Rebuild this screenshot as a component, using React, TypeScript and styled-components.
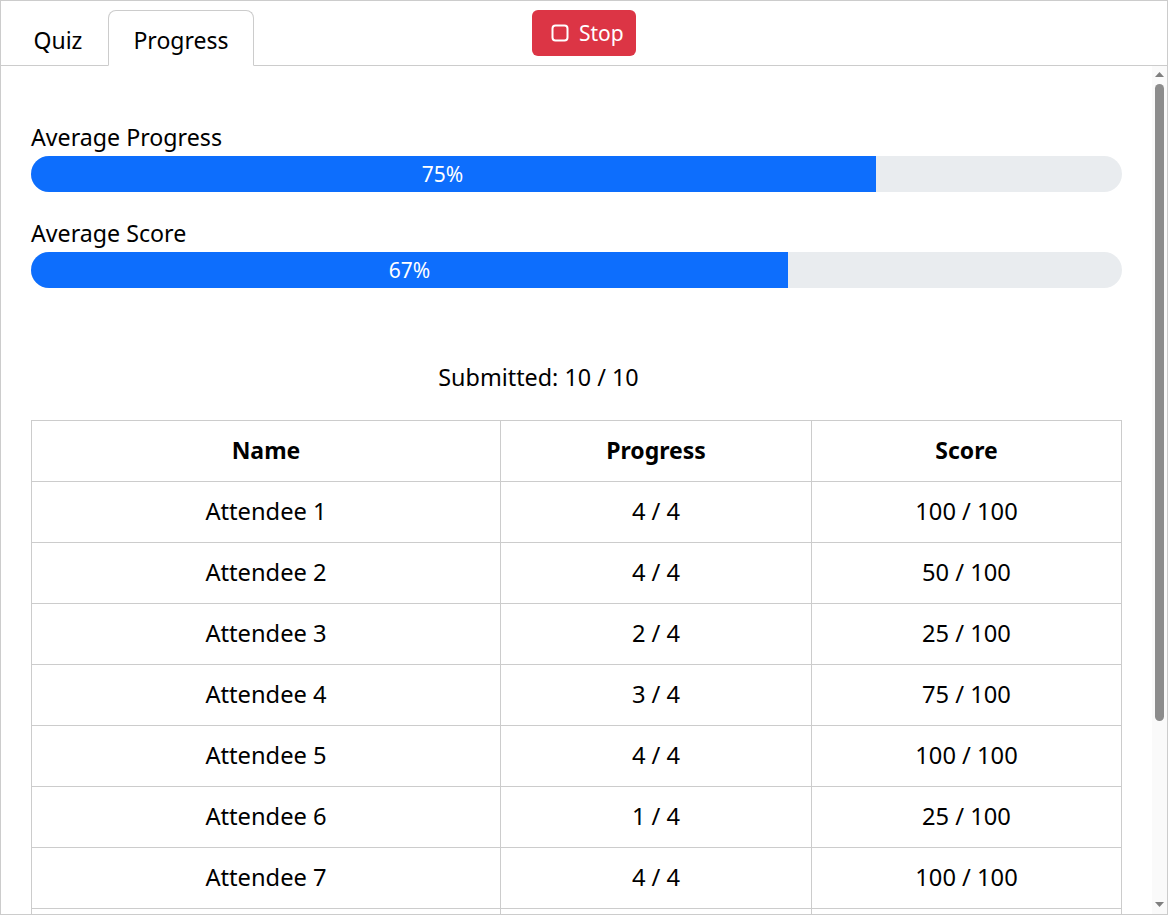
import React from 'react'
import styled, { createGlobalStyle } from 'styled-components'

const GlobalStyle = createGlobalStyle`
  html, body {
    margin: 0;
    height: 100%;
    overflow: hidden;
    background: #fff;
  }
  body {
    font-family: "Noto Sans", "Open Sans", sans-serif;
    color: #000;
  }
`

const Frame = styled.div`
  box-sizing: border-box;
  width: 1168px;
  height: 915px;
  border: 1px solid #ccc;
  display: flex;
  flex-direction: column;
  background: #fff;
`

const TabBar = styled.header`
  box-sizing: border-box;
  height: 65px;
  flex: none;
  border-bottom: 1px solid #ccc;
  display: grid;
  grid-template-columns: 1fr auto 1fr;
  padding-top: 9px;
`

const Tabs = styled.nav`
  display: flex;
  padding-left: 7px;
`

const Tab = styled.div<{ $active?: boolean }>`
  box-sizing: border-box;
  height: 56px;
  padding: 3px 24.5px 0;
  display: flex;
  align-items: center;
  font-size: 23px;
  border: 1px solid ${p => (p.$active ? '#ccc' : 'transparent')};
  border-bottom-color: ${p => (p.$active ? '#fff' : 'transparent')};
  border-radius: 8px 8px 0 0;
  background: ${p => (p.$active ? '#fff' : 'transparent')};
`

const StopButton = styled.button`
  box-sizing: border-box;
  width: 104px;
  height: 46px;
  border: none;
  border-radius: 6px;
  background: #dc3545;
  color: #fff;
  font-family: inherit;
  font-size: 21px;
  display: flex;
  align-items: center;
  justify-content: flex-start;
  gap: 10px;
  padding: 0 0 1px 19px;
`

const Body = styled.div`
  flex: 1;
  min-height: 0;
  display: flex;
`

const Pane = styled.main`
  flex: 1;
  min-width: 0;
  overflow: hidden;
  padding: 56px 30px 0;
`

const Meter = styled.section`
  margin-bottom: 26px;
`

const MeterLabel = styled.div`
  height: 34px;
  line-height: 30px;
  font-size: 23.2px;
`

const Track = styled.div`
  height: 36px;
  border-radius: 18px;
  background: #e9ecef;
  overflow: hidden;
`

const Fill = styled.div<{ $textInset?: number }>`
  box-sizing: border-box;
  height: 100%;
  background: #0d6efd;
  color: #fff;
  font-size: 21px;
  display: flex;
  align-items: center;
  justify-content: center;
  padding-right: ${p => p.$textInset ?? 0}px;
`

const Submitted = styled.p`
  margin: 66px 0 0;
  padding-right: 76px;
  height: 66px;
  line-height: 46px;
  text-align: center;
  font-size: 23.35px;
`

const Table = styled.table`
  width: 1091px;
  border-collapse: separate;
  border-spacing: 0;
  table-layout: fixed;
  font-size: 23.7px;
  border-top: 1px solid #ccc;
  border-left: 1px solid #ccc;
`

const HeadCell = styled.th`
  height: 61px;
  padding: 0 0 3px;
  box-sizing: border-box;
  border-right: 1px solid #ccc;
  border-bottom: 1px solid #ccc;
  font-size: 23px;
  font-weight: 700;
`

const Cell = styled.td`
  height: 61px;
  padding: 0 0 2px;
  box-sizing: border-box;
  border-right: 1px solid #ccc;
  border-bottom: 1px solid #ccc;
  text-align: center;
`

const Scrollbar = styled.div`
  flex: none;
  width: 15px;
  background: #fafafa;
  display: flex;
  flex-direction: column;
  align-items: center;
  padding: 6px 0 7px;
  box-sizing: border-box;
`

const Arrow = styled.svg`
  flex: none;
  display: block;
`

const ThumbLane = styled.div`
  flex: 1;
  width: 100%;
  padding: 7px 0;
  box-sizing: border-box;
`

const Thumb = styled.div`
  width: 9px;
  height: 637px;
  margin: 0 auto;
  border-radius: 5px;
  background: #8c8c8c;
`

const StopIcon = () => (
  <svg width="18" height="18" viewBox="0 0 18 18" fill="none" stroke="#fff" strokeWidth="2">
    <rect x="1.5" y="1.5" width="15" height="15" rx="3" />
  </svg>
)

const rows = [
  ['Attendee 1', '4 / 4', '100 / 100'],
  ['Attendee 2', '4 / 4', '50 / 100'],
  ['Attendee 3', '2 / 4', '25 / 100'],
  ['Attendee 4', '3 / 4', '75 / 100'],
  ['Attendee 5', '4 / 4', '100 / 100'],
  ['Attendee 6', '1 / 4', '25 / 100'],
  ['Attendee 7', '4 / 4', '100 / 100'],
  ['', '', ''],
]

export default function App() {
  return (
    <>
      <GlobalStyle />
      <Frame>
        <TabBar>
          <Tabs>
            <Tab>Quiz</Tab>
            <Tab $active>Progress</Tab>
          </Tabs>
          <StopButton>
            <StopIcon />
            Stop
          </StopButton>
        </TabBar>
        <Body>
          <Pane>
            <Meter>
              <MeterLabel>Average Progress</MeterLabel>
              <Track>
                <Fill style={{ width: '77.45%' }} $textInset={22}>75%</Fill>
              </Track>
            </Meter>
            <Meter>
              <MeterLabel>Average Score</MeterLabel>
              <Track>
                <Fill style={{ width: '69.38%' }}>67%</Fill>
              </Track>
            </Meter>
            <Submitted>Submitted: 10 / 10</Submitted>
            <Table>
              <colgroup>
                <col style={{ width: 469 }} />
                <col style={{ width: 311 }} />
                <col style={{ width: 310 }} />
              </colgroup>
              <thead>
                <tr>
                  <HeadCell>Name</HeadCell>
                  <HeadCell>Progress</HeadCell>
                  <HeadCell>Score</HeadCell>
                </tr>
              </thead>
              <tbody>
                {rows.map((r, i) => (
                  <tr key={i}>
                    <Cell>{r[0]}</Cell>
                    <Cell>{r[1]}</Cell>
                    <Cell>{r[2]}</Cell>
                  </tr>
                ))}
              </tbody>
            </Table>
          </Pane>
          <Scrollbar>
            <Arrow width="9" height="5" viewBox="0 0 9 5"><path d="M4.5 0L9 5H0z" fill="#7f7f7f" /></Arrow>
            <ThumbLane><Thumb /></ThumbLane>
            <Arrow width="9" height="5" viewBox="0 0 9 5"><path d="M0 0h9L4.5 5z" fill="#7f7f7f" /></Arrow>
          </Scrollbar>
        </Body>
      </Frame>
    </>
  )
}
